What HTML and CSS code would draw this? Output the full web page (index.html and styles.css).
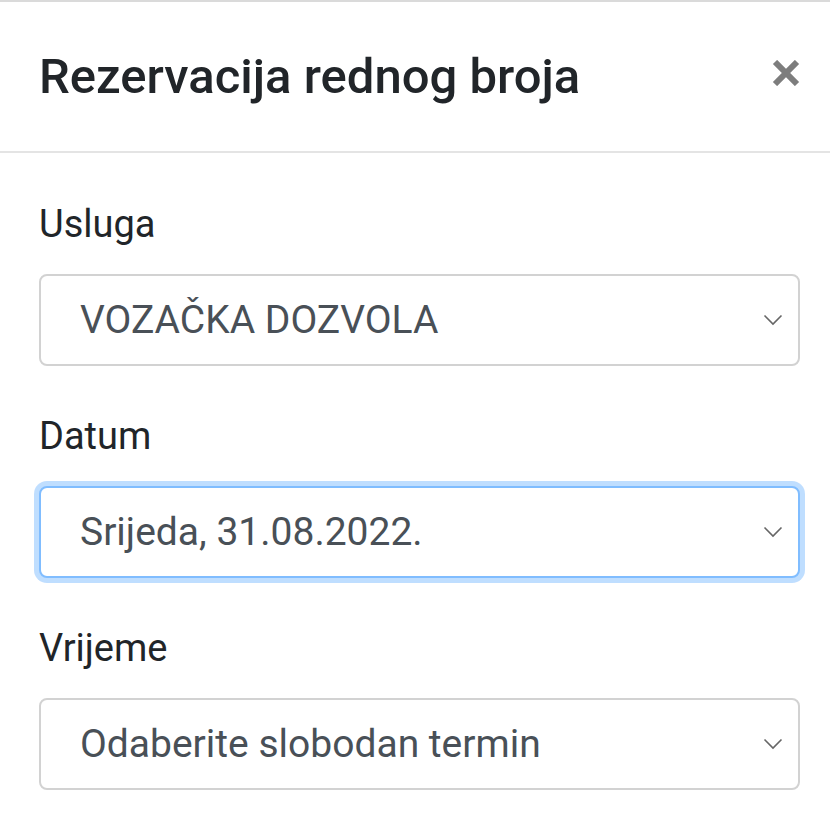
FILE: index.html
```html
<!DOCTYPE html>
<html lang="hr">
<head>
  <meta charset="UTF-8">
  <title>Rezervacija rednog broja</title>
  <link rel="stylesheet" href="styles.css">
</head>
<body>
  <div class="modal-content">
    <div class="modal-header">
      <h5 class="modal-title">Rezervacija rednog broja</h5>
      <button type="button" class="close" aria-label="Zatvori">
        <svg width="28" height="26" viewBox="0 0 28 26">
          <path d="M3 2 L25 24 M25 2 L3 24" stroke="#7d7d7d" stroke-width="6" stroke-linecap="butt"/>
        </svg>
      </button>
    </div>
    <div class="modal-body">
      <form id="reservationForm">
        <div class="form-group">
          <label for="usluga">Usluga</label>
          <div class="select-wrap">
            <select id="usluga" class="form-control">
              <option>VOZAČKA DOZVOLA</option>
            </select>
            <svg class="chevron" width="20" height="12" viewBox="0 0 20 12">
              <path d="M1.5 1.5 L10 10 L18.5 1.5" fill="none" stroke="#666" stroke-width="1.6"/>
            </svg>
          </div>
        </div>

        <div class="form-group">
          <label for="datum">Datum</label>
          <div class="select-wrap">
            <select id="datum" class="form-control focused">
              <option>Srijeda, 31.08.2022.</option>
            </select>
            <svg class="chevron" width="20" height="12" viewBox="0 0 20 12">
              <path d="M1.5 1.5 L10 10 L18.5 1.5" fill="none" stroke="#666" stroke-width="1.6"/>
            </svg>
          </div>
        </div>

        <div class="form-group">
          <label for="vrijeme">Vrijeme</label>
          <div class="select-wrap">
            <select id="vrijeme" class="form-control">
              <option>Odaberite slobodan termin</option>
            </select>
            <svg class="chevron" width="20" height="12" viewBox="0 0 20 12">
              <path d="M1.5 1.5 L10 10 L18.5 1.5" fill="none" stroke="#666" stroke-width="1.6"/>
            </svg>
          </div>
        </div>
      </form>
    </div>
  </div>
</body>
</html>
```

FILE: styles.css
```css
body {
  margin: 0;
  background-color: white;
  font-family: Roboto, "Noto Sans", Arial, sans-serif;
  color: #212529;
}

.modal-content {
  border-top: 2px solid #dadada;
}

.modal-header {
  display: flex;
  justify-content: space-between;
  align-items: center;
  height: 151px;
  box-sizing: border-box;
  padding: 0 30px 0 39px;
  border-bottom: 2px solid #e4e4e4;
}

.modal-title {
  margin: 0;
  font-size: 49px;
  font-weight: 500;
  line-height: 1.5;
  color: #212529;
}

.close {
  background: none;
  border: none;
  padding: 0;
  margin-top: -8px;
  cursor: pointer;
  display: flex;
}

.modal-body {
  padding: 43px 30px 0 39px;
}

.form-group {
  margin-bottom: 42px;
}

label {
  display: block;
  font-size: 38px;
  line-height: 1.5;
  margin-bottom: 21px;
  color: #212529;
}

.select-wrap {
  position: relative;
}

.form-control {
  appearance: none;
  -webkit-appearance: none;
  display: block;
  width: 100%;
  height: 92px;
  box-sizing: border-box;
  padding: 0 60px 0 39px;
  font-family: Roboto, "Noto Sans", Arial, sans-serif;
  font-size: 39px;
  color: #495057;
  background-color: white;
  border: 2px solid #d2d2d2;
  border-radius: 8px;
  outline: none;
}

.form-control.focused {
  border-color: #80bdff;
  box-shadow: 0 0 0 5px rgba(0, 123, 255, 0.25);
}

.chevron {
  position: absolute;
  right: 17px;
  top: 40px;
  pointer-events: none;
}
```
